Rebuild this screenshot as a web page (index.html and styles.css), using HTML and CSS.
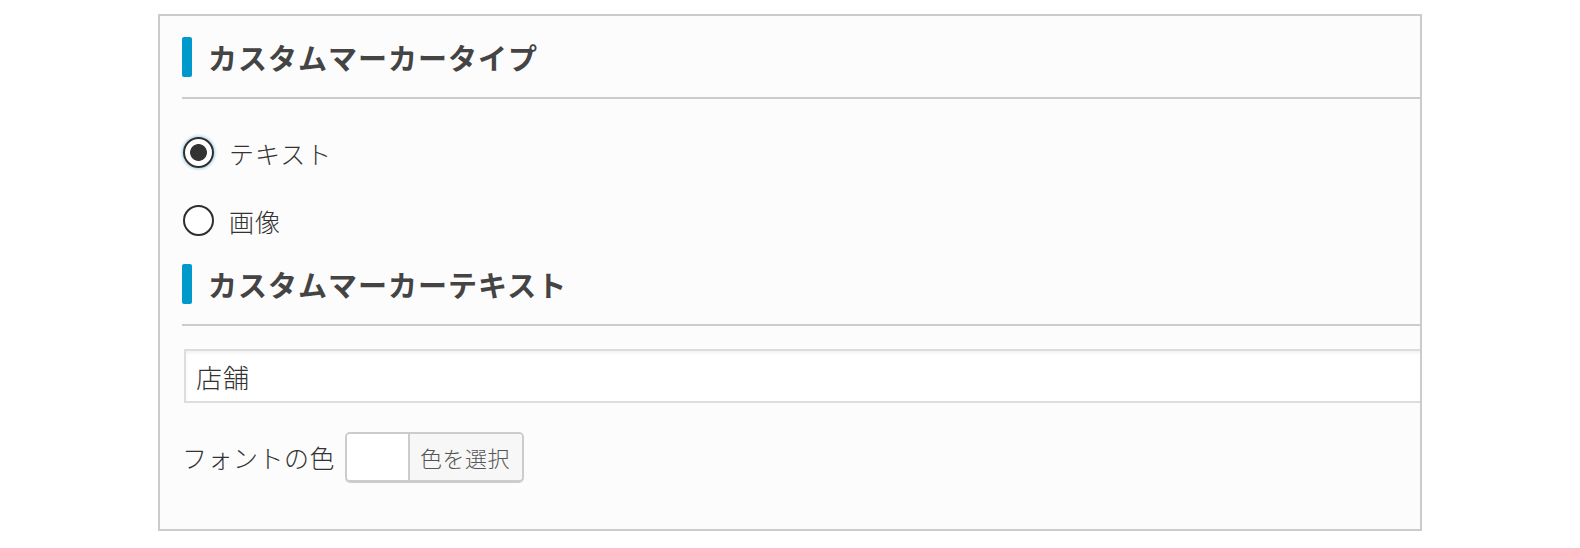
FILE: index.html
```html
<!DOCTYPE html>
<html lang="ja">
<head>
<meta charset="utf-8">
<title>カスタムマーカー</title>
<link rel="stylesheet" href="styles.css">
</head>
<body>
<div class="panel">
  <div class="panel-inner">
    <h2 class="section-title"><span class="bar"></span><span>カスタムマーカータイプ</span></h2>
    <div class="radios">
      <label class="radio-row"><input type="radio" name="type" class="radio is-focus" checked><span>テキスト</span></label>
      <label class="radio-row"><input type="radio" name="type" class="radio"><span>画像</span></label>
    </div>
    <h2 class="section-title second"><span class="bar"></span><span>カスタムマーカーテキスト</span></h2>
    <div class="text-input"><span>店舗</span></div>
    <div class="color-row">
      <span class="color-label">フォントの色</span>
      <div class="color-btn">
        <span class="swatch"></span>
        <span class="pick">色を選択</span>
      </div>
    </div>
  </div>
</div>
</body>
</html>
```

FILE: styles.css
```css
html, body {
  margin: 0;
  padding: 0;
  background: #ffffff;
}
body {
  padding: 14px 0 0 158px;
  font-family: "Noto Sans CJK JP", "Noto Sans", sans-serif;
  color: #333;
}
.panel {
  width: 1264px;
  height: 517px;
  box-sizing: border-box;
  border: 2px solid #cccccc;
  background: #fcfcfc;
  overflow: hidden;
}
.panel-inner {
  padding: 21px 0 0 22px;
}
.section-title {
  display: flex;
  align-items: center;
  gap: 16px;
  height: 40px;
  margin: 0;
  padding-bottom: 20px;
  border-bottom: 2px solid #cccccc;
  font-size: 29px;
  font-weight: 700;
  letter-spacing: 1px;
  color: #444;
}
.section-title.second {
  margin-top: 28px;
}
.bar {
  width: 10px;
  height: 40px;
  border-radius: 2px;
  background: #0099cc;
  flex: none;
}
.radios {
  display: flex;
  flex-direction: column;
  gap: 37px;
  padding-top: 38px;
}
.radio-row {
  display: flex;
  align-items: center;
  gap: 15px;
  height: 31px;
  font-size: 25px;
  font-weight: 300;
  letter-spacing: 1px;
  color: #333;
}
.radio {
  appearance: none;
  -webkit-appearance: none;
  margin: 0 0 0 1px;
  width: 31px;
  height: 31px;
  box-sizing: border-box;
  border: 2.5px solid #2e2e2e;
  border-radius: 50%;
  background: #fff;
  flex: none;
}
.radio:checked {
  background: radial-gradient(circle, #333 0 8px, #fff 8.8px);
}
.radio.is-focus {
  box-shadow: 0 0 3px 1px #9fd0ec;
}
.text-input {
  margin: 23px -40px 0 2px;
  height: 54px;
  box-sizing: border-box;
  border: 2px solid #dddddd;
  background: #fff;
  box-shadow: inset 0 2px 3px rgba(0, 0, 0, 0.06);
  display: flex;
  align-items: center;
  padding-left: 10px;
  font-size: 26px;
  font-weight: 300;
  letter-spacing: 1px;
  color: #333;
}
.color-row {
  display: flex;
  align-items: center;
  gap: 10px;
  margin-top: 29px;
}
.color-label {
  font-size: 25px;
  font-weight: 300;
  color: #333;
  letter-spacing: 0.5px;
}
.color-btn {
  display: flex;
  height: 50px;
  box-sizing: border-box;
  border: 2px solid #cccccc;
  border-radius: 5px;
  overflow: hidden;
  box-shadow: 0 1px 0 #cccccc;
}
.swatch {
  width: 61px;
  background: #ffffff;
  border-right: 2px solid #cccccc;
}
.pick {
  display: flex;
  align-items: center;
  padding: 0 12px 0 10px;
  background: #f7f7f7;
  font-size: 22px;
  font-weight: 300;
  color: #555;
  letter-spacing: 0.5px;
}
```
